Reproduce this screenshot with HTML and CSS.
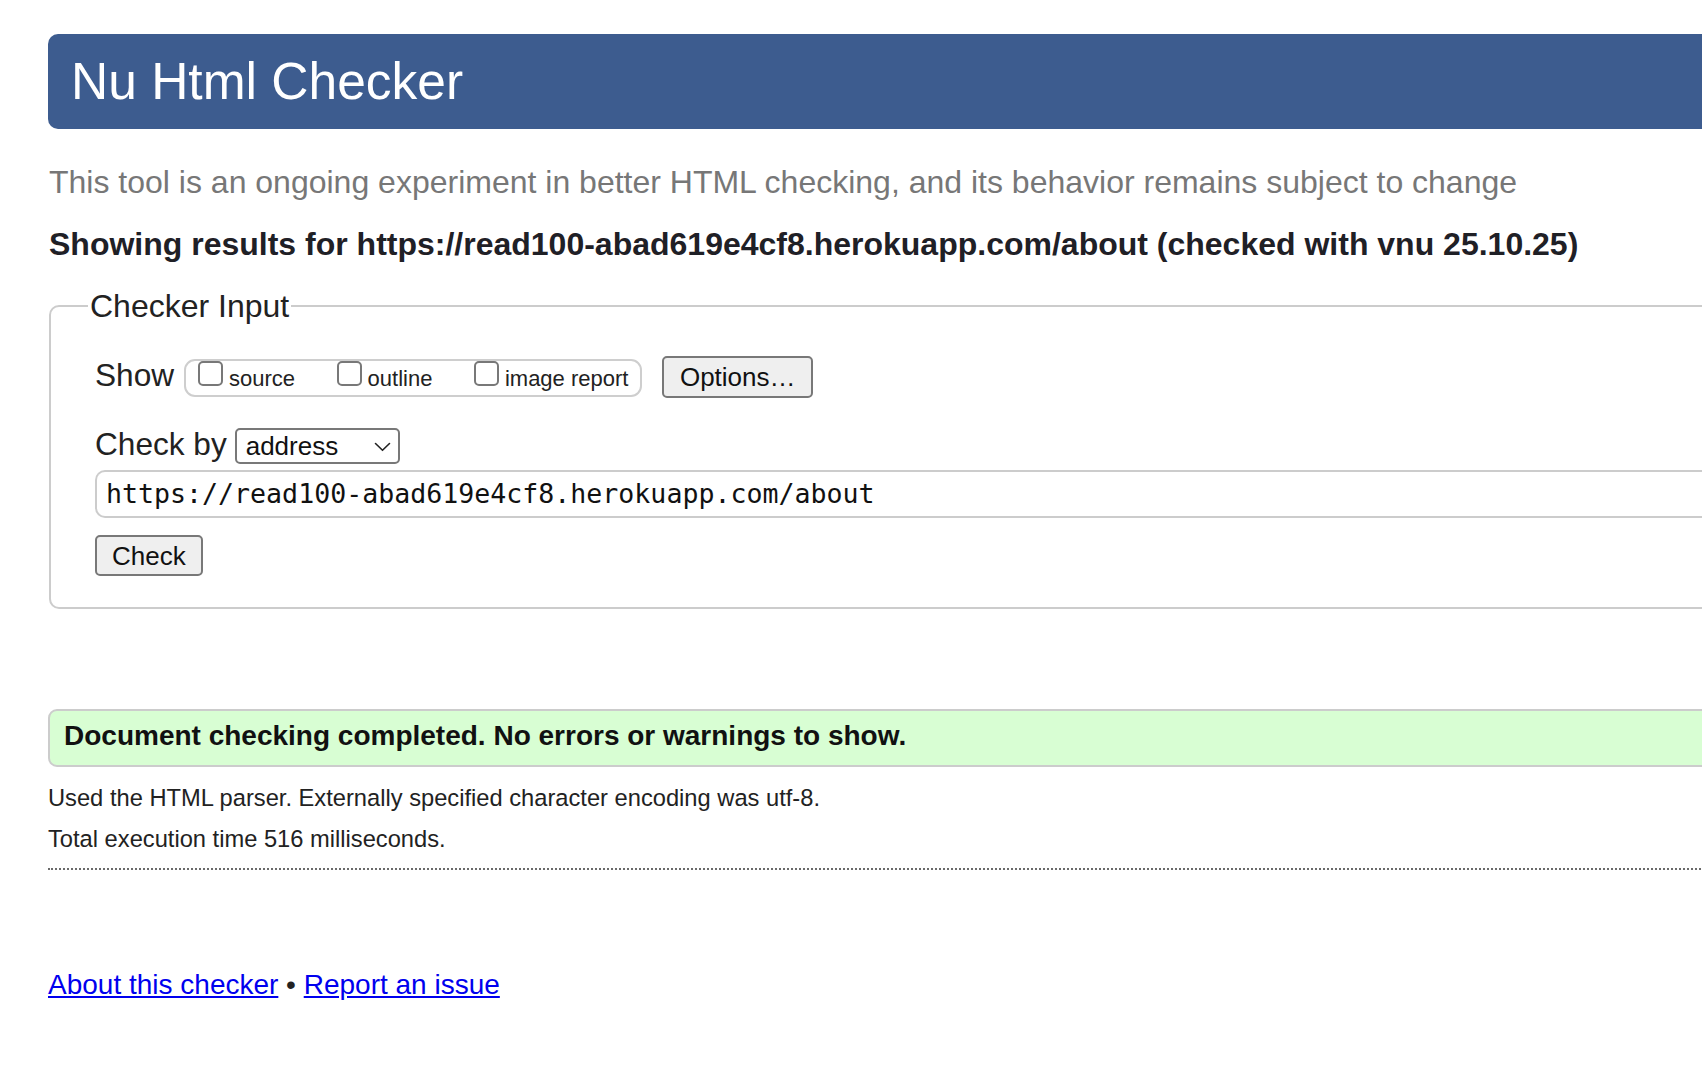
FILE: index.html
```html
<!DOCTYPE html>
<html lang="en">
<head>
<meta charset="utf-8">
<title>Nu Html Checker</title>
<link rel="stylesheet" href="styles.css">
</head>
<body>
<div class="page">
  <h1 class="header">Nu Html Checker</h1>
  <p class="tagline">This tool is an ongoing experiment in better HTML checking, and its behavior remains subject to change</p>
  <p class="results">Showing results for https://read100-abad619e4cf8.herokuapp.com/about (checked with vnu 25.10.25)</p>

  <fieldset class="checker">
    <legend class="legend">Checker Input</legend>
    <div class="row show-row">
      <span class="label show-label">Show</span>
      <div class="opts">
        <span class="opt"><span class="cb"></span><span class="opt-text">source</span></span>
        <span class="opt"><span class="cb"></span><span class="opt-text">outline</span></span>
        <span class="opt last"><span class="cb"></span><span class="opt-text">image report</span></span>
      </div>
      <button class="btn options-btn" type="button">Options…</button>
    </div>
    <div class="row by-row">
      <span class="label">Check by</span>
      <div class="select"><span class="select-text">address</span><svg class="chev" width="17" height="10" viewBox="0 0 17 10"><path d="M1.5 1.5 L8.5 8.3 L15.5 1.5" fill="none" stroke="#222" stroke-width="1.6" stroke-linecap="round" stroke-linejoin="round"/></svg></div>
    </div>
    <div class="url">https://read100-abad619e4cf8.herokuapp.com/about</div>
    <button class="btn check-btn" type="button">Check</button>
  </fieldset>

  <div class="success">Document checking completed. No errors or warnings to show.</div>
  <p class="info first">Used the HTML parser. Externally specified character encoding was utf-8.</p>
  <p class="info">Total execution time 516 milliseconds.</p>
  <div class="dots"></div>
  <p class="footer"><a class="link" href="#">About this checker</a> • <a class="link" href="#">Report an issue</a></p>
</div>
</body>
</html>
```

FILE: styles.css
```css
html, body {
  margin: 0;
  padding: 0;
  background: #ffffff;
  overflow: hidden;
}

body {
  font-family: "Liberation Sans", Arial, Helvetica, sans-serif;
  color: #222222;
}

.page {
  width: 1800px;
  padding: 34px 0 0 48px;
}

.header {
  margin: 0;
  height: 95px;
  line-height: 95px;
  padding-left: 23px;
  font-size: 51.5px;
  font-weight: normal;
  color: #ffffff;
  background: #3d5c8f;
  border-radius: 10px;
}

.tagline {
  margin: 33px 0 0 1px;
  font-size: 32px;
  line-height: 40px;
  color: #777777;
}

.results {
  margin: 22px 0 0 1px;
  font-size: 32px;
  line-height: 40px;
  font-weight: bold;
  color: #1f2026;
}

.checker {
  margin: 22px 0 0 1px;
  padding: 30px 0 31px 44px;
  border: 2px solid #cccccc;
  border-radius: 10px;
  min-width: 0;
}

.legend {
  font-size: 32px;
  line-height: 40px;
  padding: 0 2px;
  margin-left: -7px;
  color: #222222;
}

.row {
  display: flex;
  align-items: baseline;
}

.label {
  font-size: 31.6px;
  line-height: 1;
  color: #222222;
}

.show-label {
  margin-right: 10px;
}

.opts {
  display: flex;
  align-items: baseline;
  box-sizing: border-box;
  height: 38px;
  padding: 0 12px;
  border: 2px solid #cecece;
  border-radius: 11px;
}

.opt {
  display: flex;
  align-items: baseline;
  margin-right: 41.5px;
}

.opt.last {
  margin-right: 0;
}

.cb {
  display: inline-block;
  box-sizing: border-box;
  width: 25px;
  height: 25px;
  margin-right: 6px;
  border: 2px solid #787878;
  border-radius: 5px;
  background: #ffffff;
}

.opt-text {
  font-size: 22px;
  line-height: 1;
  color: #222222;
}

.btn {
  box-sizing: border-box;
  font-family: "Liberation Sans", Arial, Helvetica, sans-serif;
  font-size: 26px;
  line-height: 26px;
  color: #111111;
  background: #efefef;
  border: 2px solid #787878;
  border-radius: 5px;
  padding: 0 15.5px;
}

.options-btn {
  height: 42px;
  margin-left: 20px;
}

.by-row {
  margin-top: 30px;
}

.by-row .label {
  margin-right: 8px;
}

.select {
  box-sizing: border-box;
  display: flex;
  align-items: center;
  justify-content: space-between;
  width: 165px;
  height: 36px;
  padding: 0 7px 0 9px;
  border: 2px solid #787878;
  border-radius: 5px;
  background: #ffffff;
}

.select-text {
  font-size: 26px;
  line-height: 26px;
  color: #111111;
}

.chev {
  display: block;
  margin-top: 1px;
}

.url {
  box-sizing: border-box;
  margin-top: 6px;
  height: 48px;
  padding-left: 9px;
  border: 2px solid #cccccc;
  border-right: none;
  border-radius: 10px 0 0 10px;
  font-family: "DejaVu Sans Mono", "Liberation Mono", monospace;
  font-size: 26.6px;
  line-height: 44px;
  color: #111111;
  white-space: nowrap;
}

.check-btn {
  display: block;
  height: 41px;
  margin-top: 17px;
  padding: 0 15px;
}

.success {
  box-sizing: border-box;
  margin-top: 100px;
  height: 58px;
  padding: 7px 14px 0 14px;
  font-size: 28px;
  line-height: 36px;
  font-weight: bold;
  color: #111111;
  background: #d8fed3;
  border: 2px solid #cccccc;
  border-radius: 9px;
}

.info {
  margin: 0;
  font-size: 23.7px;
  line-height: 41px;
  color: #222222;
}

.info.first {
  margin-top: 11px;
}

.dots {
  margin-top: 8px;
  border-top: 2px dotted #6a6a6a;
}

.footer {
  margin: 98px 0 0 0;
  font-size: 28px;
  line-height: 34px;
  color: #222222;
}

.link {
  color: #0000ee;
  text-decoration: underline;
}
```
